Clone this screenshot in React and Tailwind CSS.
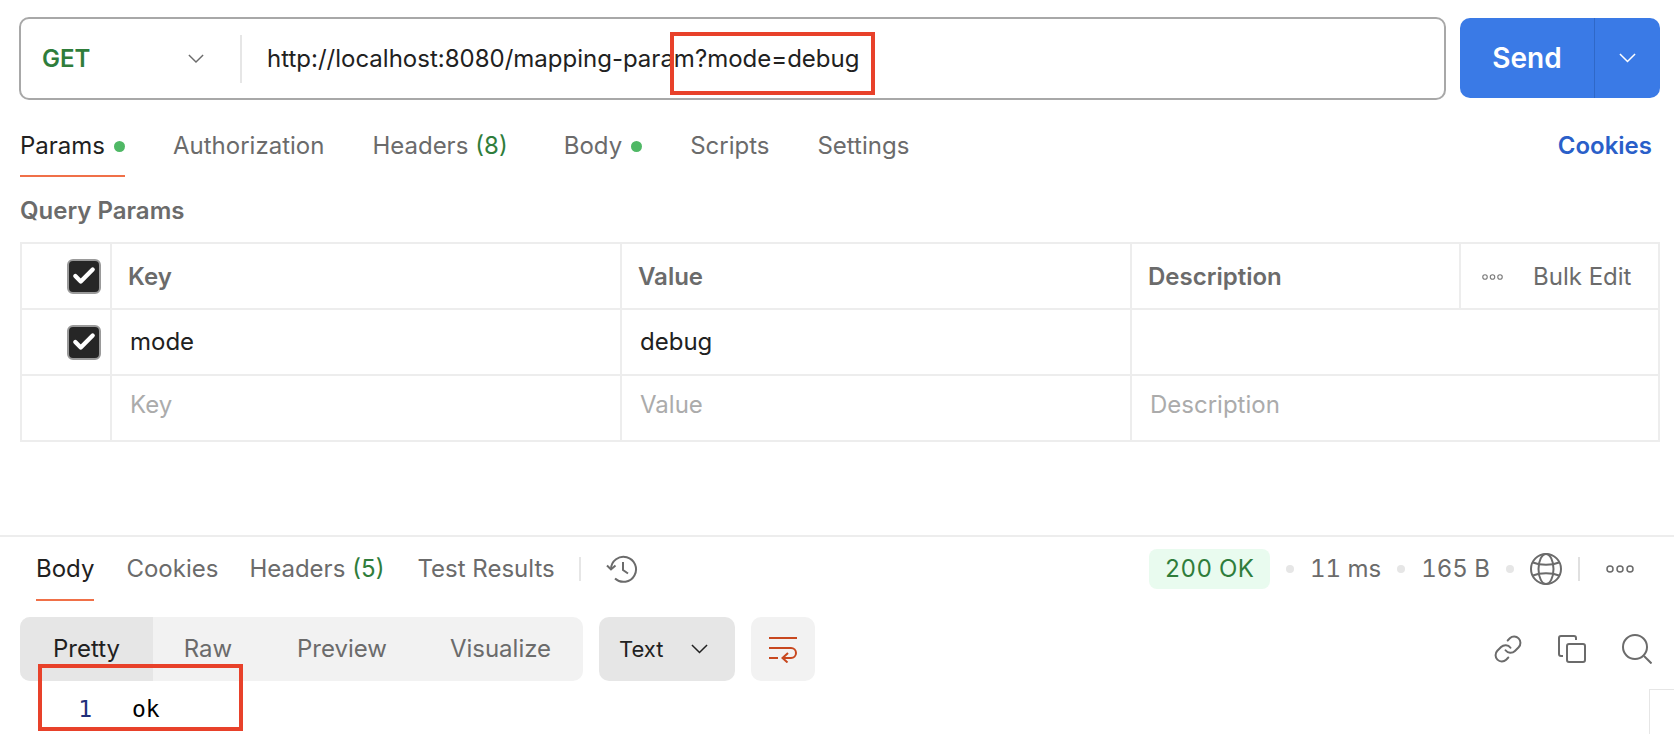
import React from "react";
import { Check, Link } from "lucide-react";

function Chevron({ className }) {
  return (
    <svg viewBox="0 0 18 10" fill="none" stroke="currentColor" strokeWidth="1.6" className={className}>
      <path d="M1 1l8 8 8-8" />
    </svg>
  );
}

function Dots({ className }) {
  return (
    <svg viewBox="0 0 28 8" fill="none" stroke="currentColor" strokeWidth="1.5" className={className}>
      <circle cx="4" cy="4" r="3" />
      <circle cx="14" cy="4" r="3" />
      <circle cx="24" cy="4" r="3" />
    </svg>
  );
}

function Tab({ label, count, dot, active, className = "" }) {
  return (
    <div className={`flex items-center h-full ${className}`}>
      <span className={active ? "text-[#212121]" : "text-[#6b6b6b]"}>{label}</span>
      {count && <span className="text-[#2f7d3b] ml-[7px]">({count})</span>}
      {dot && <span className="w-[11px] h-[11px] rounded-full bg-[#4fb865] ml-[9px]" />}
    </div>
  );
}

function CheckBox() {
  return (
    <div className="w-[34px] h-[35px] rounded-[6px] bg-[#262626] border-2 border-[#9a9a9a] flex items-center justify-center">
      <Check size={26} color="#fff" strokeWidth={4} />
    </div>
  );
}

function Cell({ children, className = "" }) {
  return <div className={`flex items-center border-[#ededed] ${className}`}>{children}</div>;
}

function Sep() {
  return <div className="w-2 h-2 rounded-full bg-[#e6e6e6]" />;
}

export default function App() {
  return (
    <div className="relative w-[1674px] h-[734px] overflow-hidden bg-white text-[24px] font-['Inter',sans-serif] text-[#212121]">
      {/* request bar */}
      <div className="flex pt-[17px] pl-[19px] h-[100px]">
        <div className="w-[1427px] h-[83px] border-2 border-[#a8a8a8] rounded-[10px] flex items-center">
          <div className="w-[219px] flex items-center pl-[21px] pr-[36px] justify-between">
            <span className="font-semibold text-[#2f7d3b] text-[24px]">GET</span>
            <Chevron className="w-[16px] text-[#6b6b6b]" />
          </div>
          <div className="w-[2px] h-[48px] bg-[#e6e6e6]" />
          <div className="pl-[25px] text-[24px]">http://localhost:8080/mapping-param?mode=debug</div>
        </div>
        <div className="ml-[14px] mt-px w-[200px] h-[80px] rounded-[10px] bg-[#3a7ae6] flex text-white">
          <div className="w-[134px] flex items-center justify-center font-semibold text-[28px] border-r border-[#2f68c8] box-content">Send</div>
          <div className="flex-1 flex items-center justify-center">
            <Chevron className="w-[17px]" />
          </div>
        </div>
      </div>

      {/* request tabs */}
      <div className="relative flex items-center h-[60px] pl-[20px] pr-[22px] mt-[16px]">
        <Tab label="Params" dot active />
        <Tab label="Authorization" className="ml-[48px]" />
        <Tab label="Headers" count="8" className="ml-[48px]" />
        <Tab label="Body" dot className="ml-[56px]" />
        <Tab label="Scripts" className="ml-[48px]" />
        <Tab label="Settings" className="ml-[48px]" />
        <span className="ml-auto text-[#2a5fc9] font-semibold">Cookies</span>
        <div className="absolute left-[20px] top-[59px] w-[105px] h-[2px] bg-[#f07048]" />
      </div>

      <div className="pl-[20px] mt-[20px] h-[30px] flex items-center font-semibold text-[#6b6b6b] text-[24px]">Query Params</div>

      {/* params table */}
      <div className="ml-[20px] mt-[16px] w-[1640px] border-2 border-[#ededed] grid grid-cols-[90px_510px_510px_329px_197px] grid-rows-[66px_66px_64px]">
        <Cell className="justify-end pr-[9px] border-r-2 border-b-2"><CheckBox /></Cell>
        <Cell className="pl-[16px] pt-px border-r-2 border-b-2 font-semibold text-[#6b6b6b]">Key</Cell>
        <Cell className="pl-[16px] pt-px border-r-2 border-b-2 font-semibold text-[#6b6b6b]">Value</Cell>
        <Cell className="pl-[16px] pt-px border-r-2 border-b-2 font-semibold text-[#6b6b6b]">Description</Cell>
        <Cell className="pl-[21px] pt-px border-b-2 text-[#6b6b6b]">
          <Dots className="w-[21px] text-[#7a7a7a]" />
          <span className="ml-[30px]">Bulk Edit</span>
        </Cell>

        <Cell className="justify-end pr-[9px] border-r-2 border-b-2"><CheckBox /></Cell>
        <Cell className="pl-[18px] border-r-2 border-b-2">mode</Cell>
        <Cell className="pl-[18px] border-r-2 border-b-2">debug</Cell>
        <Cell className="col-span-2 border-b-2" />

        <Cell className="border-r-2" />
        <Cell className="pl-[18px] border-r-2 text-[#ababab] pb-[6px]">Key</Cell>
        <Cell className="pl-[18px] border-r-2 text-[#ababab] pb-[6px]">Value</Cell>
        <Cell className="col-span-2 pl-[18px] text-[#ababab] pb-[6px]">Description</Cell>
      </div>

      {/* response header */}
      <div className="mt-[93px] border-t-2 border-[#ededed] h-[65px] relative flex items-center pl-[36px] pr-[40px]">
        <Tab label="Body" active />
        <Tab label="Cookies" className="ml-[32px]" />
        <Tab label="Headers" count="5" className="ml-[31px]" />
        <Tab label="Test Results" className="ml-[33px]" />
        <div className="w-[2px] h-[24px] bg-[#e6e6e6] ml-[24px]" />
        <svg viewBox="0 0 32 30" fill="none" stroke="#6b6b6b" strokeWidth="2" className="w-[32px] h-[30px] ml-[25px]">
          <path d="M5 15a12.5 12.5 0 1 1 4 9.5" />
          <path d="M1 11.5l4 4 4.5-4" />
          <path d="M17 8v8l5 3.5" />
        </svg>
        <div className="ml-auto flex items-center text-[#6b6b6b] tabular-nums">
          <div className="w-[121px] h-[40px] rounded-[8px] bg-[#e9fbef] text-[#2f7d3b] flex items-center justify-center tracking-[0.3px]">200 OK</div>
          <div className="mx-[16px]"><Sep /></div>
          <span>11 ms</span>
          <div className="mx-[16px]"><Sep /></div>
          <span>165 B</span>
          <div className="mx-[16px]"><Sep /></div>
          <svg viewBox="0 0 32 32" fill="none" stroke="#6b6b6b" strokeWidth="2" className="w-[32px] h-[32px]">
            <circle cx="16" cy="16" r="15" />
            <ellipse cx="16" cy="16" rx="7.5" ry="15" />
            <path d="M3 9.5c7 3 19 3 26 0M3 22.5c7-3 19-3 26 0" />
          </svg>
          <div className="w-[2px] h-[24px] bg-[#e0e0e0] ml-[16px] mr-[26px]" />
          <Dots className="w-[28px] text-[#6b6b6b]" />
        </div>
        <div className="absolute left-[36px] top-[62px] w-[58px] h-[2px] bg-[#f07048]" />
      </div>

      {/* response toolbar */}
      <div className="flex items-center mt-[17px] pl-[20px] pr-[22px] h-[64px]">
        <div className="flex h-full w-[563px] rounded-[10px] bg-[#f2f2f2] overflow-hidden text-[#6b6b6b]">
          <div className="w-[133px] bg-[#e6e6e6] text-[#212121] flex items-center justify-center">Pretty</div>
          <div className="w-[110px] flex items-center justify-center">Raw</div>
          <div className="w-[158px] flex items-center justify-center">Preview</div>
          <div className="flex-1 flex items-center justify-center pr-[3px]">Visualize</div>
        </div>
        <div className="ml-[16px] w-[136px] h-full rounded-[10px] bg-[#e6e6e6] flex items-center pl-[20px] text-[22px]">
          Text
          <Chevron className="w-[17px] ml-[28px]" />
        </div>
        <div className="ml-[16px] w-[64px] h-full rounded-[10px] bg-[#f2f2f2] flex items-center justify-center">
          <svg viewBox="0 0 30 28" fill="none" stroke="#c8481f" strokeWidth="2" className="w-[30px] h-[28px]">
            <path d="M1 3h28M1 13h22a4.5 4.5 0 0 1 0 10H15M1 23h9" />
            <path d="M20 18l-5.5 5 5 4.5" />
          </svg>
        </div>
        <div className="ml-auto flex items-center text-[#6b6b6b]">
          <Link size={30} strokeWidth={1.6} />
          <svg viewBox="0 0 28 28" fill="none" stroke="currentColor" strokeWidth="2" className="w-[28px] h-[28px] ml-[35px]">
            <rect x="9" y="9" width="18" height="18" rx="2" />
            <path d="M5 21H3a2 2 0 0 1-2-2V3a2 2 0 0 1 2-2h13a2 2 0 0 1 2 2v2" />
          </svg>
          <svg viewBox="0 0 30 30" fill="none" stroke="currentColor" strokeWidth="2" className="w-[30px] h-[30px] ml-[36px]">
            <circle cx="13" cy="13" r="12" />
            <path d="M22 22l7.5 7.5" />
          </svg>
        </div>
      </div>

      {/* response body */}
      <div className="flex items-center h-[40px] mt-[8px] text-[23px]">
        <span className="w-[92px] text-right text-[#1f2f7a] font-['DejaVu_Sans_Mono',monospace]">1</span>
        <span className="ml-[40px] font-['DejaVu_Sans_Mono',monospace] text-black">ok</span>
      </div>

      <div className="absolute left-[1649px] top-[689px] w-[25px] h-[45px] border-l border-t border-[#e6e6e6]" />

      {/* annotation boxes */}
      <div className="absolute left-[670px] top-[32px] w-[205px] h-[63px] border-4 border-[#e8412a]" />
      <div className="absolute left-[38px] top-[664px] w-[205px] h-[67px] border-4 border-[#e8412a]" />
    </div>
  );
}
